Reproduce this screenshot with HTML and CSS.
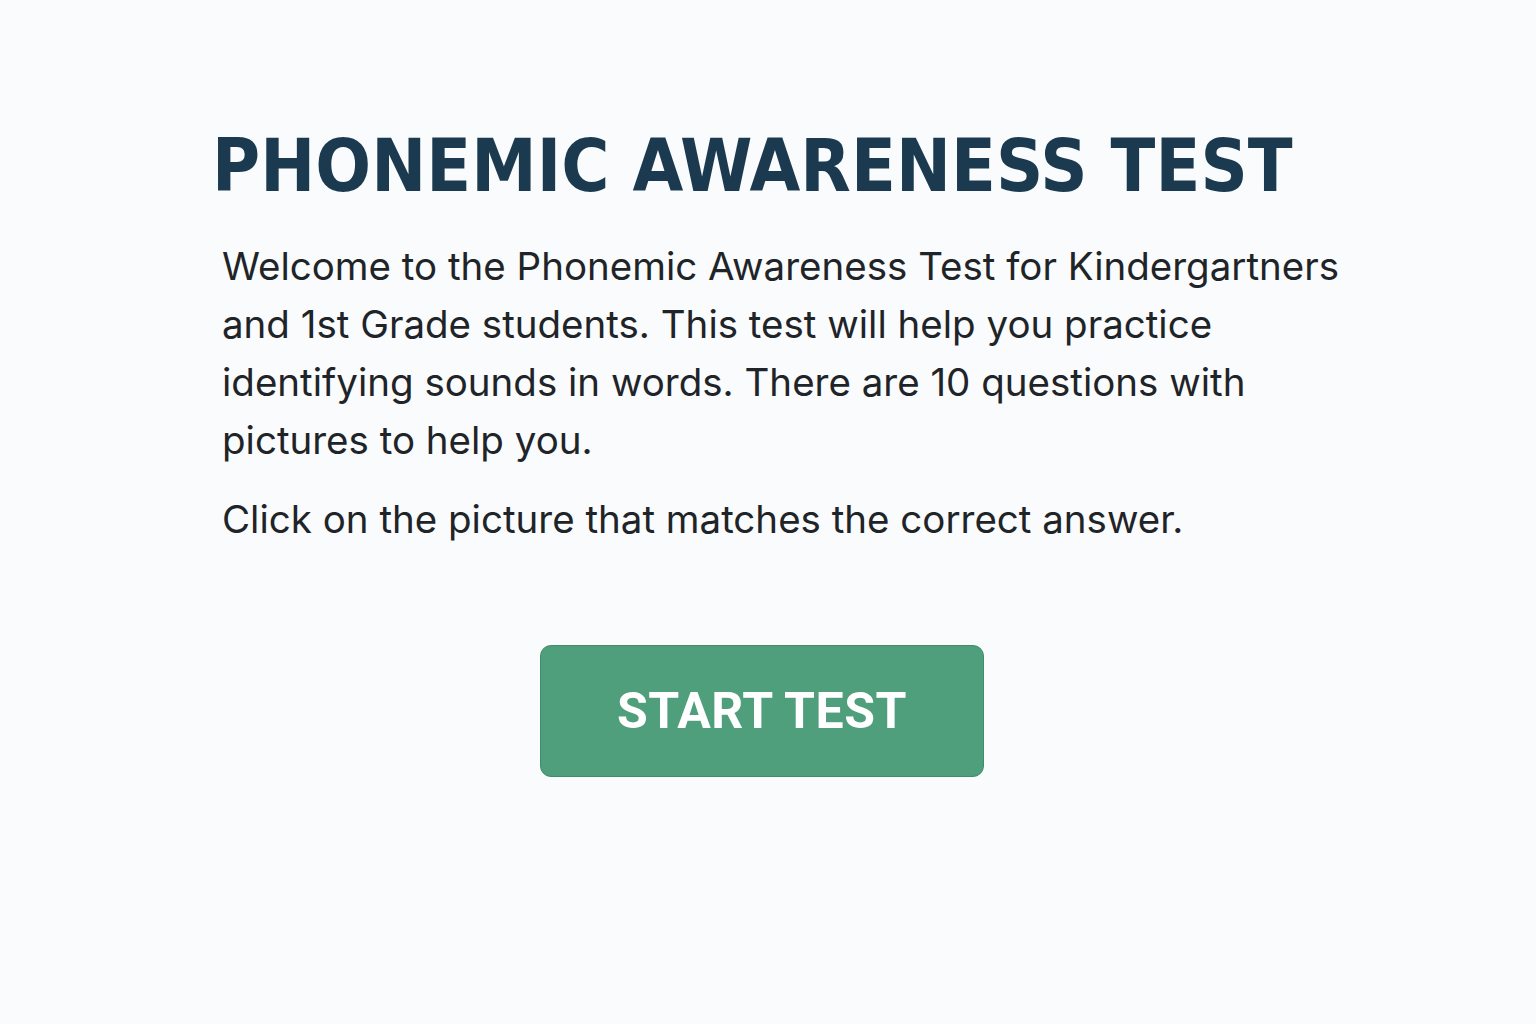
FILE: index.html
```html
<!DOCTYPE html>
<html lang="en">
<head>
<meta charset="utf-8">
<title>Phonemic Awareness Test</title>
<link rel="stylesheet" href="styles.css">
</head>
<body>
<main class="page">
  <h1 class="title">PHONEMIC AWARENESS TEST</h1>
  <div class="intro">
    <p class="lead">Welcome to the Phonemic Awareness Test for Kindergartners and 1st Grade students. This test will help you practice identifying sounds in words. There are 10 questions with pictures to help you.</p>
    <p class="lead second">Click on the picture that matches the correct answer.</p>
  </div>
  <div class="actions">
    <button class="start">START TEST</button>
  </div>
</main>
</body>
</html>
```
FILE: styles.css
```css
html, body {
  margin: 0;
  padding: 0;
  background: #f9fbfc;
}
body {
  font-family: Inter, "Noto Sans", sans-serif;
  color: #1f2428;
}
.page {
  padding: 128px 0 0 212px;
  display: flex;
  flex-direction: column;
}
.title {
  margin: 0;
  font-family: "DejaVu Sans Condensed", "DejaVu Sans", sans-serif;
  font-stretch: condensed;
  font-weight: 700;
  font-size: 73px;
  line-height: 76px;
  letter-spacing: 0.1px;
  color: #1b3a4f;
}
.intro {
  padding-left: 10px;
  margin-top: 33px;
  width: 1140px;
}
.lead {
  margin: 0;
  font-size: 38.5px;
  line-height: 58px;
  font-weight: 400;
}
.second {
  margin-top: 21px;
}
.actions {
  margin-top: 97px;
  padding-left: 328px;
}
.start {
  width: 444px;
  height: 132px;
  background: #4f9e7c;
  border: 1.5px solid #3e8d6b;
  border-radius: 11px;
  color: #ffffff;
  font-family: Roboto, sans-serif;
  font-weight: 700;
  font-size: 50px;
  letter-spacing: 0.5px;
  padding: 0;
}
```
